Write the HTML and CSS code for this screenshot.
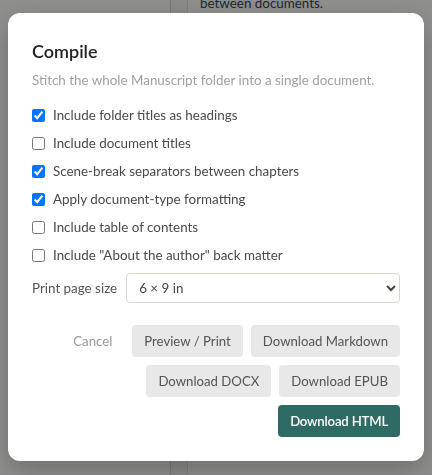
FILE: index.html
```html
<!DOCTYPE html>
<html lang="en">
<head>
  <meta charset="UTF-8" />
  <meta name="viewport" content="width=device-width, initial-scale=1.0" />
  <title>Compile</title>
  <link rel="stylesheet" href="styles.css">
</head>
<body>
  <div class="backdrop">
    <div class="bg-side"></div>
    <div class="bg-gutter"></div>
    <div class="bg-main">
      <p class="bg-note">between documents.</p>
    </div>
  </div>

  <div class="overlay">
    <div class="dialog">
      <h2 class="dialog-title">Compile</h2>
      <p class="dialog-sub">Stitch the whole Manuscript folder into a single document.</p>

      <div class="options">
        <label class="option"><input type="checkbox" checked> Include folder titles as headings</label>
        <label class="option"><input type="checkbox"> Include document titles</label>
        <label class="option"><input type="checkbox" checked> Scene-break separators between chapters</label>
        <label class="option"><input type="checkbox" checked> Apply document-type formatting</label>
        <label class="option"><input type="checkbox"> Include table of contents</label>
        <label class="option"><input type="checkbox"> Include "About the author" back matter</label>
      </div>

      <div class="page-size">
        <span class="page-size-label">Print page size</span>
        <select class="page-size-select">
          <option>6 × 9 in</option>
          <option>5 × 8 in</option>
          <option>Letter</option>
          <option>A4</option>
        </select>
      </div>

      <div class="actions">
        <button class="btn btn-link">Cancel</button>
        <button class="btn">Preview / Print</button>
        <button class="btn">Download Markdown</button>
        <button class="btn">Download DOCX</button>
        <button class="btn">Download EPUB</button>
        <button class="btn btn-primary">Download HTML</button>
      </div>
    </div>
  </div>
</body>
</html>
```

FILE: styles.css
```css
:root {
  --primary-color: #2e6b64;
  --font-family: 'Lato', 'Noto Sans', sans-serif;
}

body {
  font-family: var(--font-family);
  margin: 0;
  color: #444;
  height: 475px;
  overflow: hidden;
}

.backdrop {
  display: flex;
  height: 100%;
  background: #f7f7f5;
}

.bg-side {
  width: 170px;
  border-right: 1px solid #ccc;
}

.bg-gutter {
  width: 16px;
  background: #efefed;
  border-right: 1px solid #ddd;
}

.bg-main {
  flex: 1;
  padding: 0 12px;
}

.bg-note {
  margin: -5px 0 0;
  font-size: 13.4px;
  color: #345;
}

.overlay {
  position: fixed;
  inset: 0;
  background: rgba(0, 0, 0, 0.42);
  display: flex;
  justify-content: center;
  align-items: flex-start;
  padding-top: 13px;
}

.dialog {
  width: 416px;
  box-sizing: border-box;
  background: white;
  border-radius: 12px;
  padding: 26px 24px 24px;
  box-shadow: 0 10px 30px rgba(0, 0, 0, 0.25);
}

.dialog-title {
  margin: 0;
  font-size: 18px;
  font-weight: 600;
  color: #222;
  line-height: 24px;
}

.dialog-sub {
  margin: 7px 0 15px;
  font-size: 13.4px;
  color: #a0a0a0;
  line-height: 20px;
}

.options {
  display: flex;
  flex-direction: column;
  gap: 8px;
}

.option {
  display: flex;
  align-items: center;
  gap: 8px;
  font-size: 13.4px;
  line-height: 20px;
  color: #4a4a4a;
}

.option input {
  margin: 0;
  width: 13px;
  height: 13px;
}

.page-size {
  display: flex;
  align-items: center;
  gap: 9px;
  margin-top: 8px;
}

.page-size-label {
  font-size: 13.4px;
  color: #555;
}

.page-size-select {
  flex: 1;
  height: 30px;
  padding: 0 8px;
  font-family: var(--font-family);
  font-size: 13.4px;
  color: #444;
  background: white;
  border: 1px solid #ddd8cc;
  border-radius: 4px;
}

.actions {
  display: flex;
  flex-wrap: wrap;
  justify-content: flex-end;
  gap: 8px;
  margin-top: 22px;
}

.btn {
  height: 32px;
  padding: 0 12px;
  font-family: var(--font-family);
  font-size: 13.2px;
  color: #555;
  background: #e8e8e8;
  border: none;
  border-radius: 4px;
  cursor: pointer;
}

.btn-link {
  background: none;
  color: #999;
}

.btn-primary {
  background: var(--primary-color);
  color: white;
  font-weight: 600;
  letter-spacing: -0.2px;
}
```
